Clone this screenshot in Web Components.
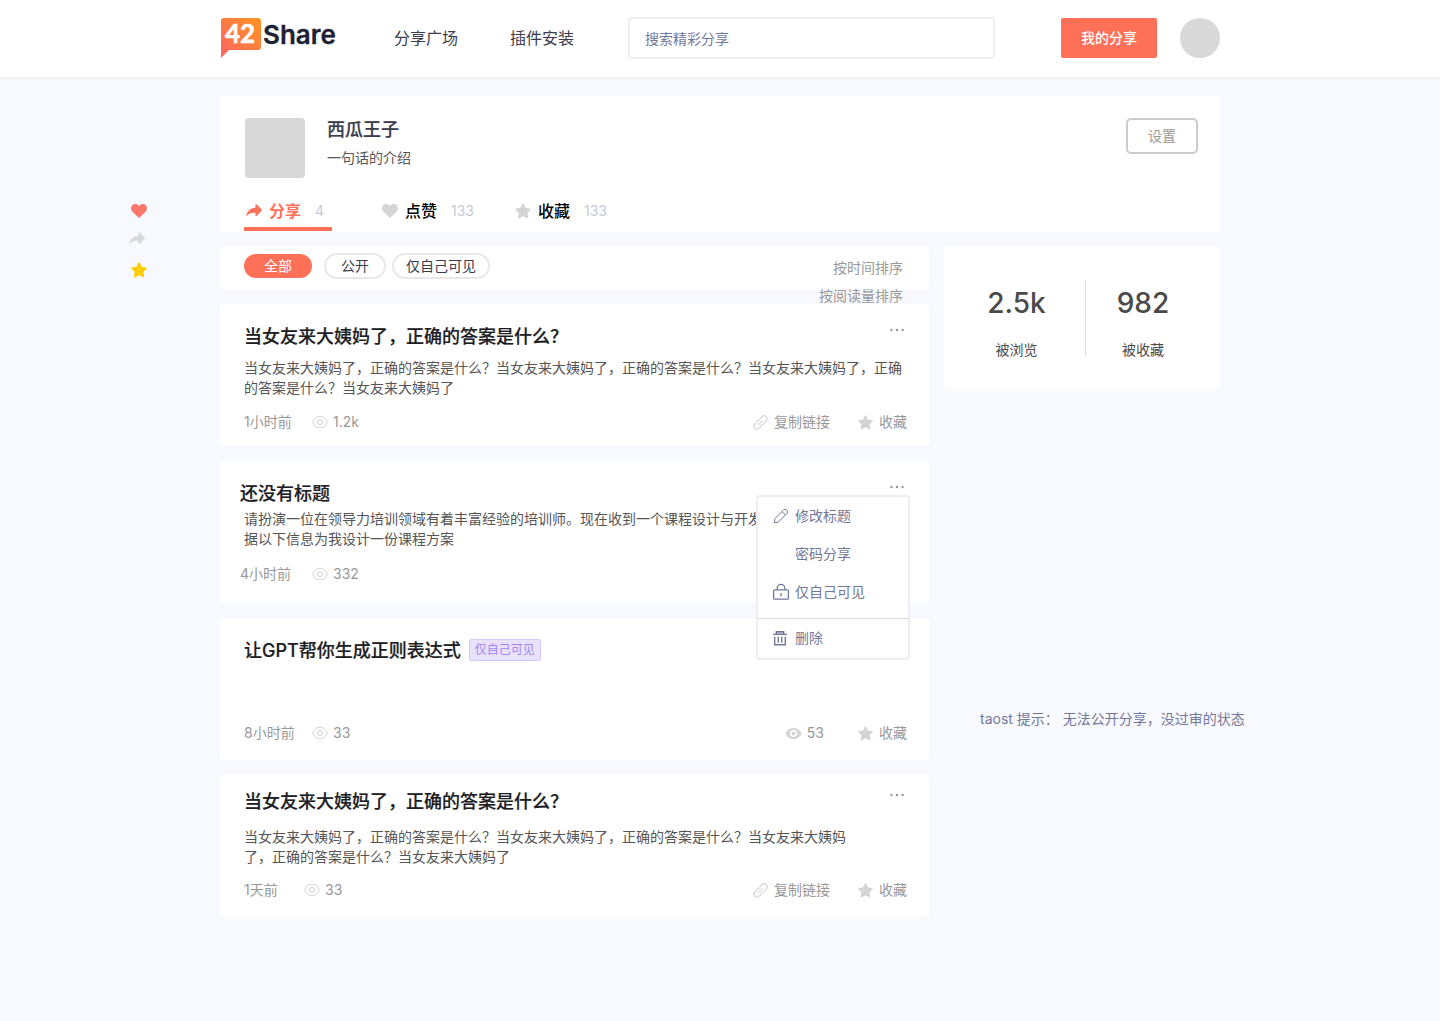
<!DOCTYPE html>
<html lang="zh-CN">
<head>
<meta charset="utf-8">
<meta name="viewport" content="width=device-width, initial-scale=1">
<title>42Share</title>
<style>
  :root {
    --coral: #ff7059;
    --ink: #3a3c4e;
    --muted: #999;
    --slate: #74779a;
    --line: #eeeef5;
    --icon: #d4d4d4;
  }
  body {
    margin: 0;
    background: #f8f9fe;
    color: var(--ink);
    font-family: Inter, "Noto Sans CJK SC", sans-serif;
    font-size: 14px;
    line-height: 20px;
  }
</style>
</head>
<body>
<share-app></share-app>

<script>
const define = (name, html, setup) => {
  const template = document.createElement('template');
  template.innerHTML = `<style>
    *, *::before { box-sizing: border-box; }
    button { font: inherit; color: inherit; border: 0; background: none; padding: 0; margin: 0; cursor: pointer; }
    a { color: inherit; text-decoration: none; }
    h1, h2, p, ul { margin: 0; padding: 0; list-style: none; }
  </style>` + html;
  customElements.define(name, class extends HTMLElement {
    constructor() {
      super();
      this.attachShadow({ mode: 'open' }).append(template.content.cloneNode(true));
    }
    connectedCallback() { if (setup) setup(this, this.shadowRoot); }
  });
};

const ICONS = {
  heart: '<path fill="currentColor" d="M8 15 1.2 8.4C-.4 6.7-.4 4 1.2 2.3 2.9.7 5.6.7 7.2 2.3L8 3.1l.8-.8c1.6-1.6 4.3-1.6 6 0 1.6 1.7 1.6 4.4 0 6.1z"/>',
  share: '<path fill="currentColor" d="M.1 13.2C1 8.200 4.300 5 9.400 4.700V2.100c0-.9.8-1.200 1.400-.6l4.900 4.900c.4.400.400.900 0 1.300l-4.900 5c-.6.600-1.400.300-1.400-.6V9.700C5.800 9.500 2.600 10.500.1 13.200z"/>',
  star: '<path fill="currentColor" stroke="currentColor" stroke-width="1.600" stroke-linejoin="round" d="m8 1.200 2.100 4.300 4.900.7-3.500 3.400.8 4.900L8 12.200l-4.300 2.300.8-4.900L1 6.200l4.900-.7z"/>',
  eye: '<g fill="none" stroke="currentColor"><path d="M.6 8C2.200 4.800 4.200 2.400 6.500 2.400h3C11.800 2.400 13.800 4.800 15.400 8c-1.600 3.200-3.600 5.600-5.900 5.600h-3C4.200 13.600 2.200 11.200.6 8z"/><circle cx="8" cy="8" r="2.500"/></g>',
  eyefill: '<path fill="currentColor" d="M-.5 8C.8 4.400 4 2 8 2s7.200 2.400 8.500 6c-1.300 3.600-4.500 6-8.500 6S.8 11.600-.5 8z"/><circle cx="8" cy="8" r="2.900" fill="none" stroke="#fff" stroke-width="1.600"/>',
  link: '<g fill="none" stroke="currentColor" stroke-width="1.200" stroke-linecap="round"><path d="M7.200 4.200l2.300-2.300a3.200 3.200 0 0 1 4.600 4.600l-3.200 3.200a3.200 3.200 0 0 1-2 .9"/><path d="M8.800 11.800l-2.300 2.300a3.200 3.200 0 0 1-4.600-4.600l3.200-3.200a3.200 3.200 0 0 1 2-.9"/><path d="m6 10 4-4"/></g>',
  dots: '<g fill="currentColor"><circle cx="1.600" cy="8" r="1.400"/><circle cx="8" cy="8" r="1.400"/><circle cx="14.400" cy="8" r="1.400"/></g>',
  pencil: '<g fill="none" stroke="currentColor" stroke-linejoin="round"><path d="M1.200 14.800l.7-4.100 8.600-8.600a2.300 2.300 0 0 1 3.300 0l.1.100a2.300 2.300 0 0 1 0 3.300l-8.600 8.600z"/><path d="m9 3.600 3.400 3.400"/></g>',
  lock: '<g fill="none" stroke="currentColor" stroke-width="1.300"><rect x=".6" y="5.800" width="14.800" height="9.400" rx="1"/><path d="M4.200 5.800V4.100a3.800 3.800 0 0 1 7.600 0v1.700M8 9v3.400"/></g>',
  trash: '<g fill="none" stroke="currentColor" stroke-width="1.400"><path d="M0 4.400h14M3.300 4V1.700h7.400V4M1.700 6.800v8h10.600v-8M5.300 6.800v6M8.700 6.800v6"/></g><path fill="currentColor" opacity=".4" d="M3.300 1.700h7.400v2.700H3.300z"/>'
};
define('ui-icon', `<style>
  :host { display: block; flex: none; width: var(--size, 16px); height: var(--size, 16px); }
  svg { display: block; width: 100%; height: 100%; overflow: visible; }
</style><svg viewBox="0 0 16 16" aria-hidden="true"></svg>`, (el, root) => {
  root.querySelector('svg').innerHTML = ICONS[el.getAttribute('name')] || '';
});

define('brand-logo', `<style>
  :host { display: block; flex: none; }
  svg { display: block; overflow: visible; }
  text { stroke-linejoin: round; }
  .num { font: 700 26px Lato, sans-serif; fill: #fff; stroke: #fff; stroke-width: .6px; }
  .word { font: 600 26px Inter, sans-serif; fill: #1e2033; stroke: #1e2033; stroke-width: .3px; }
</style>
<svg width="118" height="40" viewBox="0 0 118 40" role="img">
  <defs><linearGradient id="g" x1="0" y1="1" x2="1" y2="0">
    <stop offset="0" stop-color="#ff6464"/><stop offset="1" stop-color="#ff9322"/>
  </linearGradient></defs>
  <path fill="url(#g)" d="M1 3a3 3 0 0 1 3-3h34a3 3 0 0 1 3 3v26a3 3 0 0 1-3 3H9l-8 8z"/>
  <text class="num" x="5" y="25">42</text>
  <text class="word" x="43" y="26">Share</text>
</svg>`);

define('site-header', `<style>
  :host { display: block; background: #fff; box-shadow: 0 1px 4px rgba(30, 32, 60, .07); position: relative; }
  .bar { max-width: 1000px; margin: 0 auto; padding: 17px 0 18px; display: flex; align-items: center; }
  nav { display: flex; gap: 52px; margin: 0 54px 0 56px; font-size: 16px; white-space: nowrap; }
  input { flex: 1; min-width: 0; height: 42px; margin-right: 66px; padding: 0 15px; border: 2px solid var(--line);
    border-radius: 3px; font: inherit; color: var(--ink); background: #fff; outline: none; }
  input::placeholder { color: var(--slate); opacity: 1; }
  .mine { height: 40px; padding: 0 20px; border-radius: 2px; background: var(--coral); color: #fff; font-weight: 500; white-space: nowrap; }
  .avatar { flex: none; width: 40px; height: 40px; margin-left: 23px; border-radius: 50%; background: #d8d8d8; }
</style>
<div class="bar">
  <brand-logo></brand-logo>
  <nav><a href="#square">分享广场</a><a href="#plugin">插件安装</a></nav>
  <input type="search" aria-label="搜索精彩分享" placeholder="搜索精彩分享">
  <button class="mine">我的分享</button>
  <div class="avatar"></div>
</div>`);

define('profile-tab', `<style>
  :host { display: block; }
  a { display: flex; align-items: center; height: 36px; padding: 0 2px; border-bottom: 4px solid transparent; color: #000; }
  ui-icon { color: var(--icon); margin-right: 7px; }
  .label { font-size: 16px; font-weight: 500; }
  .count { margin-left: 14px; color: #c8cad8; }
  :host([active]) { min-width: 88px; }
  :host([active]) a { border-color: var(--coral); }
  :host([active]) ui-icon { color: var(--coral); }
  :host([active]) .label { color: var(--coral); font-weight: 700; }
</style>
<a href="#tab"><ui-icon></ui-icon><span class="label"><slot></slot></span><span class="count"></span></a>`, (el, root) => {
  const icon = document.createElement('ui-icon');
  icon.setAttribute('name', el.getAttribute('icon'));
  root.querySelector('ui-icon').replaceWith(icon);
  root.querySelector('.count').textContent = el.getAttribute('count');
});

define('user-profile', `<style>
  :host { display: block; background: #fff; padding-bottom: 1px; }
  .top { display: flex; align-items: flex-start; padding: 22px 22px 0 25px; }
  .photo { width: 60px; height: 60px; border-radius: 4px; background: #d8d8d8; margin-right: 22px; }
  .who { flex: 1; }
  h1 { font-size: 18px; line-height: 24px; font-weight: 500; -webkit-text-stroke: .2px; }
  p { margin-top: 6px; color: #555; }
  button { height: 36px; padding: 0 20px; border: 2px solid #cbcbcb; border-radius: 5px; color: var(--muted); }
  .tabs { display: grid; grid-template-columns: 136px 133px auto; justify-items: start; padding: 0 24px; margin-top: 17px; }
</style>
<div class="top">
  <div class="photo"></div>
  <div class="who"><h1>西瓜王子</h1><p>一句话的介绍</p></div>
  <button>设置</button>
</div>
<div class="tabs">
  <profile-tab icon="share" count="4" active>分享</profile-tab>
  <profile-tab icon="heart" count="133">点赞</profile-tab>
  <profile-tab icon="star" count="133">收藏</profile-tab>
</div>`);

define('side-rail', `<style>
  :host { display: grid; grid-template-columns: 18px; grid-template-rows: 28px 31px 16px; align-items: start; justify-items: end; justify-content: end; padding: 107px 73px 0 0; }
  .heart { color: #f8766a; }
  .share { color: #d8d8d8; justify-self: start; }
  .star { color: #ffcc00; }
</style>
<button class="heart" aria-label="点赞"><ui-icon name="heart"></ui-icon></button>
<button class="share" aria-label="分享"><ui-icon name="share"></ui-icon></button>
<button class="star" aria-label="收藏"><ui-icon name="star"></ui-icon></button>`);

define('filter-bar', `<style>
  :host { display: flex; justify-content: space-between; height: 42px; padding: 6px 26px 0 24px; background: #fff; border-radius: 4px; }
  .pills { display: flex; align-items: center; gap: 6px; height: 26px; }
  .pills button { height: 26px; padding: 0 12px; border: 2px solid #e8e8ea; border-radius: 13px; }
  .pills .short { padding: 0 15px; }
  .pills .on { height: 24px; padding: 0 20px; margin-right: 6px; border: 0; background: var(--coral); color: #fff; }
  .sort { position: relative; color: var(--muted); line-height: 28px; padding-top: 1px; }
  .more { position: absolute; top: 29px; right: 0; white-space: nowrap; }
</style>
<div class="pills"><button class="on">全部</button><button class="short">公开</button><button>仅自己可见</button></div>
<div class="sort"><a href="#time">按时间排序</a><a class="more" href="#reads">按阅读量排序</a></div>`);

define('share-card', `<style>
  :host { display: flex; flex-direction: column; position: relative; min-height: 142px; padding: var(--top, 20px) 22px var(--bottom, 17px) var(--left, 24px);
    background: #fff; border-radius: 4px; }
  .head { display: flex; align-items: flex-start; gap: 8px; padding-right: 3px; }
  h2 { font-size: 18px; line-height: 26px; font-weight: 500; color: #1d1d24; -webkit-text-stroke: .2px; }
  .badge { flex: 1; display: flex; align-items: center; height: 24px; }
  .dots { height: 12px; color: #999; --size: 14px; display: flex; align-items: center; }
  .text { margin-top: var(--gap, 8px); padding-left: var(--inset, 0); max-width: var(--measure, none); color: #555; }
  .foot { display: flex; align-items: center; margin-top: auto; color: var(--muted); }
  .time { min-width: var(--time, 68px); }
  .views { flex: 1; display: flex; align-items: center; gap: 5px; }
  .views ui-icon { color: var(--icon); }
  .actions { display: flex; gap: var(--action-gap, 28px); }
</style>
<div class="head"><h2><slot name="title"></slot></h2><div class="badge"><slot name="badge"></slot></div>
  <button class="dots" aria-label="更多"><ui-icon name="dots"></ui-icon></button></div>
<p class="text"><slot></slot></p>
<slot name="menu"></slot>
<div class="foot">
  <span class="time"></span>
  <span class="views"><ui-icon name="eye"></ui-icon><span class="n"></span></span>
  <div class="actions"><slot name="action"></slot></div>
</div>`, (el, root) => {
  root.querySelector('.time').textContent = el.getAttribute('time');
  root.querySelector('.n').textContent = el.getAttribute('views');
  if (el.hasAttribute('plain')) root.querySelector('.dots').remove();
});

define('card-action', `<style>
  :host { display: block; }
  button { display: flex; align-items: center; gap: 6px; --size: 15px; white-space: nowrap; }
  ui-icon { color: var(--icon); }
</style><button><ui-icon></ui-icon><slot></slot></button>`, (el, root) => {
  const icon = document.createElement('ui-icon');
  icon.setAttribute('name', el.getAttribute('icon'));
  root.querySelector('ui-icon').replaceWith(icon);
});

define('private-badge', `<style>
  :host { display: block; height: 22px; padding: 0 6px; box-shadow: inset 0 0 0 1px #d6c9fb; border-radius: 3px; background: #e8e2fd;
    color: #a384f5; font-size: 12px; line-height: 22px; white-space: nowrap; }
</style><slot></slot>`);

define('action-menu', `<style>
  :host { position: absolute; z-index: 10; top: 34px; right: 19px; width: 154px; box-sizing: border-box; padding-bottom: 1px; background: #fff;
    border: 2px solid #ededf4; border-radius: 4px; color: var(--slate); }
  button { display: flex; align-items: center; gap: 6px; width: 100%; height: 38px; padding: 0 15px; }
  ul + ul { margin-top: 7px; border-top: 1px solid #dcdcea; }
</style>
<ul>
  <li><button><ui-icon name="pencil"></ui-icon>修改标题</button></li>
  <li><button><ui-icon></ui-icon>密码分享</button></li>
  <li><button><ui-icon name="lock"></ui-icon>仅自己可见</button></li>
</ul>
<ul><li><button><ui-icon name="trash"></ui-icon>删除</button></li></ul>`);

define('stat-card', `<style>
  :host { display: grid; grid-template-columns: 6fr 1px 5fr; align-items: center; height: 142px; padding: 0 20px 0 4px; background: #fff; border-radius: 4px; text-align: center; color: #4a4a4a; }
  div { padding-top: 4px; }
  strong { display: block; font-size: 28px; line-height: 44px; font-weight: 500; margin-bottom: 15px; }
  i { height: 76px; background: #e0e0e0; }
</style>
<div><strong>2.5k</strong>被浏览</div><i></i><div><strong>982</strong>被收藏</div>`);

define('share-app', `<style>
  :host { display: block; }
  .page { display: grid; grid-template-columns: minmax(0, 1fr) minmax(0, 1000px) minmax(0, 1fr); padding: 19px 0 24px; }
  .columns { display: grid; grid-template-columns: minmax(0, 1fr) 276px; gap: 15px; margin-top: 15px; }
  .feed { display: flex; flex-direction: column; gap: 15px; }
  .toast { margin-top: 320px; padding-left: 36px; color: var(--slate); white-space: pre; }
  .first { --bottom: 14px; }
  .second { --left: 20px; --inset: 4px; --gap: 2px; --time: 72px; --bottom: 19px; }
  .third { --action-gap: 34px; }
  .fourth { --top: 14px; --gap: 12px; --time: 60px; --measure: 612px; }
</style>
<site-header></site-header>
<div class="page">
  <side-rail></side-rail>
  <main>
    <user-profile></user-profile>
    <div class="columns">
      <div class="feed">
        <filter-bar></filter-bar>
        <share-card class="first" time="1小时前" views="1.2k">
          <span slot="title">当女友来大姨妈了，正确的答案是什么？</span>当女友来大姨妈了，正确的答案是什么？当女友来大姨妈了，正确的答案是什么？当女友来大姨妈了，正确的答案是什么？当女友来大姨妈了<card-action slot="action" icon="link">复制链接</card-action><card-action slot="action" icon="star">收藏</card-action>
        </share-card>
        <share-card class="second" time="4小时前" views="332">
          <span slot="title">还没有标题</span>请扮演一位在领导力培训领域有着丰富经验的培训师。现在收到一个课程设计与开发<br>据以下信息为我设计一份课程方案<action-menu slot="menu"></action-menu>
        </share-card>
        <share-card class="third" time="8小时前" views="33" plain>
          <span slot="title">让GPT帮你生成正则表达式</span><private-badge slot="badge">仅自己可见</private-badge>
          <card-action slot="action" icon="eyefill">53</card-action><card-action slot="action" icon="star">收藏</card-action>
        </share-card>
        <share-card class="fourth" time="1天前" views="33">
          <span slot="title">当女友来大姨妈了，正确的答案是什么？</span>当女友来大姨妈了，正确的答案是什么？当女友来大姨妈了，正确的答案是什么？当女友来大姨妈了，正确的答案是什么？当女友来大姨妈了<card-action slot="action" icon="link">复制链接</card-action><card-action slot="action" icon="star">收藏</card-action>
        </share-card>
      </div>
      <aside>
        <stat-card></stat-card>
        <p class="toast" role="status">taost 提示： 无法公开分享，没过审的状态</p>
      </aside>
    </div>
  </main>
</div>`);
</script>
</body>
</html>
